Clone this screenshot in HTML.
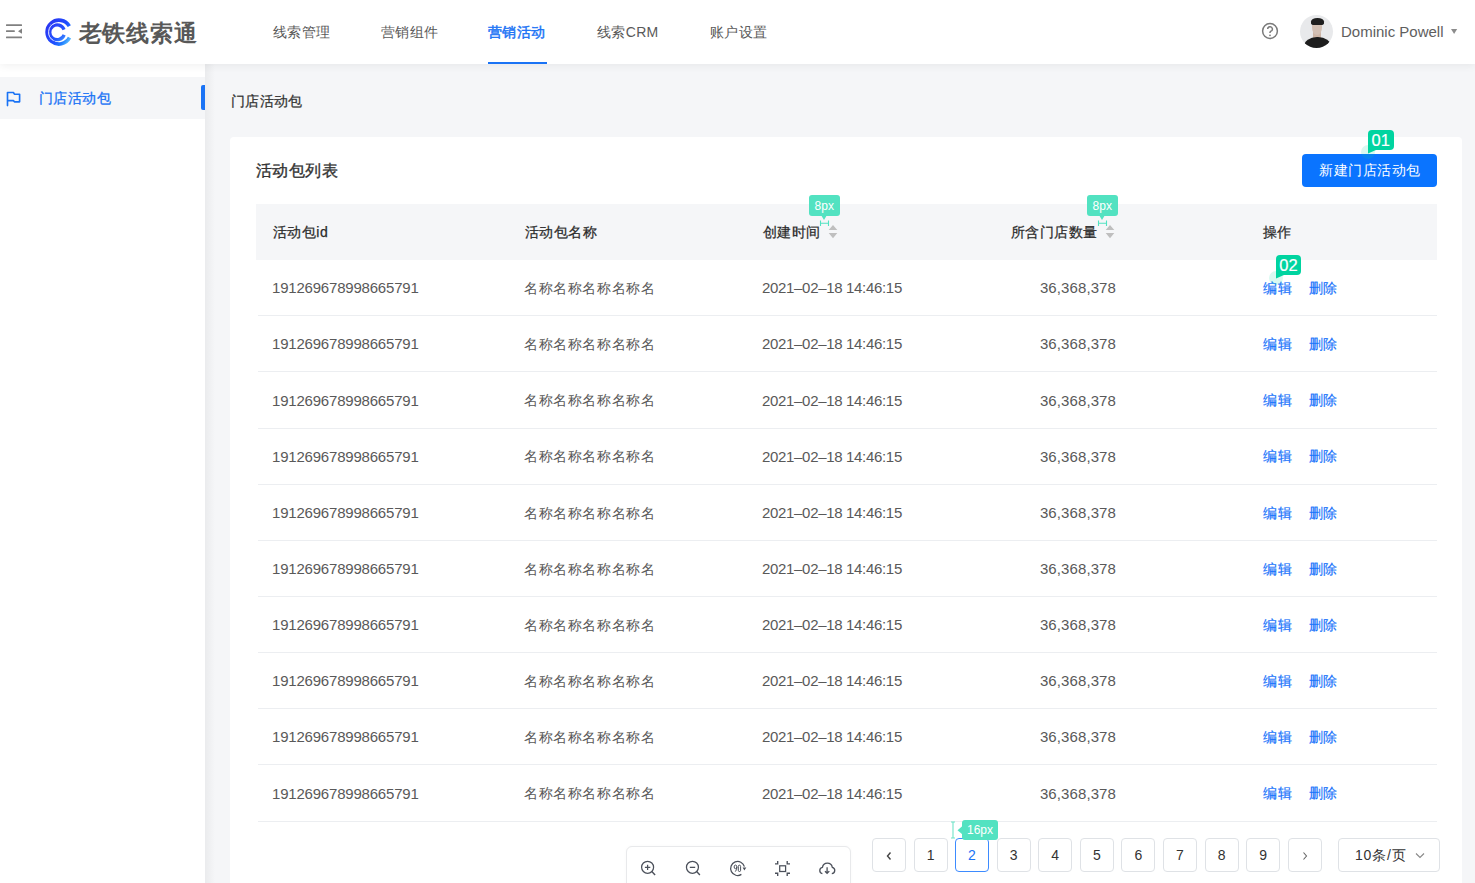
<!DOCTYPE html>
<html><head><meta charset="utf-8">
<style>
*{box-sizing:border-box;margin:0;padding:0}
html,body{width:1475px;height:883px;overflow:hidden;background:#f5f6f8;font-family:"Liberation Sans",sans-serif;color:#595959}
.abs{position:absolute}
#hdr{position:absolute;left:0;top:0;width:1475px;height:64px;background:#fff;box-shadow:0 2px 8px rgba(0,0,0,0.06);z-index:5}
#side{position:absolute;left:0;top:64px;width:205px;height:819px;background:#fff;z-index:2}
.nav{position:absolute;top:22.5px;font-size:14px;color:#595959;white-space:nowrap;line-height:18px;letter-spacing:0.35px}
.nav.on{color:#1a73f5;font-weight:normal;-webkit-text-stroke:0.45px #1a73f5}
#card{position:absolute;left:230px;top:137px;width:1232px;height:760px;background:#fff;border-radius:4px}
.th{position:absolute;font-size:14px;color:#2b2b2b;letter-spacing:0.45px;-webkit-text-stroke:0.25px #2b2b2b;white-space:nowrap;line-height:18px}
.td{position:absolute;font-size:14.5px;color:#595959;white-space:nowrap;line-height:18px}
.row-line{position:absolute;left:258px;width:1179px;height:1px;background:#eceef1}
.link{color:#1a74fb;-webkit-text-stroke:0.2px #1a74fb}
.pg{position:absolute;top:838px;width:34px;height:34px;border:1px solid #dfe2e6;border-radius:4px;background:#fff;font-size:14px;color:#333;text-align:center;line-height:32px}
.tag{position:absolute;background:#3fd8a9;color:#fff;border-radius:3px;font-size:11px;text-align:center}
.pg.on{border-color:#3d8bff;color:#1a73f5}
.tag8{position:absolute;width:30.5px;height:21px;background:#52e2c1;border-radius:3px;color:#fff;font-size:12px;line-height:23px;text-align:center}
.tagn{position:absolute;width:25.5px;height:20px;background:#00d4a0;border-radius:4px;color:#fff;font-size:16.5px;font-weight:normal;-webkit-text-stroke:0.2px #fff;line-height:20px;text-align:center}
</style></head><body>
<div id="hdr">
  <!-- hamburger -->
  <svg class="abs" style="left:5px;top:23px" width="18" height="17" viewBox="0 0 18 17">
    <rect x="1" y="1.2" width="16" height="1.7" rx="0.5" fill="#808080"/>
    <rect x="1" y="7.3" width="8.8" height="1.7" rx="0.5" fill="#808080"/>
    <rect x="1" y="13.6" width="16" height="1.7" rx="0.5" fill="#808080"/>
    <path d="M17 5.6 L13 8.2 L17 10.7 Z" fill="#808080"/>
  </svg>
  <!-- logo -->
  <svg class="abs" style="left:40px;top:12px" width="40" height="40" viewBox="0 0 40 40">
    <defs><linearGradient id="lg" x1="0" y1="0.2" x2="1" y2="0.9"><stop offset="0" stop-color="#2a36f2"/><stop offset="0.55" stop-color="#1f4dff"/><stop offset="0.8" stop-color="#1f7dff"/><stop offset="1" stop-color="#5cc0ff"/></linearGradient>
    <linearGradient id="lg2" x1="0" y1="0" x2="1" y2="1"><stop offset="0" stop-color="#2c38f5"/><stop offset="0.7" stop-color="#2458ff"/><stop offset="1" stop-color="#3d8dff"/></linearGradient></defs>
    <path d="M29.31 14.15 A11.9 11.9 0 1 0 29.51 25.69" fill="none" stroke="url(#lg)" stroke-width="3.7"/>
    <path d="M10.04 27.62 A11.700000000000001 11.700000000000001 0 0 0 10.31 12.27" fill="none" stroke="#fff" stroke-width="0.5" opacity="0.6"/>
    <path d="M24.06 17.53 A7.4 7.4 0 1 0 24.15 22.83" fill="none" stroke="url(#lg2)" stroke-width="3.2"/>
    <path d="M13.40 28.51 A9.6 9.6 0 0 1 14.92 11.18" fill="none" stroke="#fff" stroke-width="0.9"/>
  </svg>
  <div class="abs" style="left:78.5px;top:17.5px;font-size:23px;font-weight:bold;color:#585858;letter-spacing:0.8px;line-height:30px">老铁线索通</div>
  <div class="nav" style="left:273px">线索管理</div>
  <div class="nav" style="left:381px">营销组件</div>
  <div class="nav on" style="left:488px">营销活动</div>
  <div class="abs" style="left:488px;top:62px;width:59px;height:2px;background:#1a73f5"></div>
  <div class="nav" style="left:597px">线索CRM</div>
  <div class="nav" style="left:710px">账户设置</div>
  <svg class="abs" style="left:1261px;top:22px" width="18" height="18" viewBox="0 0 18 18">
    <circle cx="9" cy="9" r="7.4" fill="none" stroke="#7a7a7a" stroke-width="1.5"/>
    <path d="M6.7 7.1 A2.35 2.35 0 1 1 9.7 9.3 Q9 9.7 9 10.5 L9 11" fill="none" stroke="#7a7a7a" stroke-width="1.5"/>
    <circle cx="9" cy="13.3" r="0.9" fill="#7a7a7a"/>
  </svg>
  <div class="abs" style="left:1300px;top:15px;width:33px;height:33px;border-radius:50%;background:#e8e9eb;overflow:hidden">
    <div class="abs" style="left:12.5px;top:16px;width:8px;height:8px;background:#cdb5a6"></div>
    <div class="abs" style="left:3.5px;top:21.5px;width:27px;height:20px;border-radius:48% 48% 0 0;background:#1d1d1d"></div>
    <div class="abs" style="left:11.5px;top:5px;width:10.5px;height:15px;border-radius:42% 42% 50% 50%;background:#d3c0b4"></div>
    <div class="abs" style="left:11px;top:3px;width:12.5px;height:7px;border-radius:50% 50% 25% 25%;background:#1f1f1f"></div>
  </div>
  <div class="abs" style="left:1341px;top:22.5px;font-size:15px;color:#5e5e5e;line-height:18px">Dominic Powell</div>
  <svg class="abs" style="left:1450.5px;top:28.5px" width="7" height="6" viewBox="0 0 7 6"><path d="M0 0 L6.2 0 L3.1 5 Z" fill="#8c8c8c"/></svg>
</div>

<div class="abs" style="left:205px;top:64px;width:10px;height:819px;background:linear-gradient(to right,rgba(0,0,0,0.045),rgba(0,0,0,0));z-index:1"></div>
<div id="side">
  <div class="abs" style="left:0;top:13px;width:205px;height:42px;background:#f5f6f8"></div>
  <div class="abs" style="left:201px;top:21px;width:4px;height:25px;background:#1a73f5;border-radius:2px 0 0 2px"></div>
  <svg class="abs" style="left:0px;top:20px" width="30" height="30" viewBox="0 0 30 30">
    <path d="M7.5 21.6 V8.5 H13.4 L14.4 10.2 H19.6 V17.8 H14.4 L13.4 16.6 H7.5" fill="none" stroke="#1a73f5" stroke-width="1.65" stroke-linejoin="round" stroke-linecap="round"/>
  </svg>
  <div class="abs" style="left:39px;top:25px;font-size:14px;color:#1a73f5;line-height:18px;letter-spacing:0.4px;-webkit-text-stroke:0.3px #1a73f5">门店活动包</div>
</div>

<div class="abs" style="left:231px;top:92px;font-size:14px;color:#333;line-height:18px;letter-spacing:0.3px;-webkit-text-stroke:0.25px #333">门店活动包</div>

<div id="card"></div>
<div class="abs" style="left:256px;top:161px;font-size:16px;color:#333;line-height:20px;letter-spacing:0.4px;-webkit-text-stroke:0.35px #333">活动包列表</div>
<div class="abs" style="left:1302px;top:154px;width:135px;height:33px;background:#0a74ff;border-radius:4px;color:#fff;font-size:14px;text-align:center;line-height:33px;letter-spacing:0.5px;padding-left:1px">新建门店活动包</div>

<!-- table header -->
<div class="abs" style="left:256px;top:204px;width:1181px;height:56px;background:#f5f6f8"></div>
<div class="th" style="left:273px;top:223px">活动包id</div>
<div class="th" style="left:525px;top:223px">活动包名称</div>
<div class="th" style="left:763px;top:223px">创建时间</div>
<div class="th" style="left:1011px;top:223px">所含门店数量</div>
<div class="th" style="left:1263px;top:223px">操作</div>
<svg class="abs" style="left:828px;top:223px" width="10" height="16" viewBox="0 0 10 16"><path d="M0.7 7 L5 2 L9.3 7 Z M0.7 10 L5 15.3 L9.3 10 Z" fill="#bfbfbf"/></svg>
<svg class="abs" style="left:1105px;top:223px" width="10" height="16" viewBox="0 0 10 16"><path d="M0.7 7 L5 2 L9.3 7 Z M0.7 10 L5 15.3 L9.3 10 Z" fill="#bfbfbf"/></svg>

<!-- rows -->
<div class="td" style="left:272px;top:279.20px;font-size:15px;letter-spacing:-0.2px">191269678998665791</div>
<div class="td" style="left:524px;top:279.0px;font-size:14px;letter-spacing:0.6px">名称名称名称名称名</div>
<div class="td" style="left:762px;top:279.20px;font-size:15px;letter-spacing:-0.32px">2021–02–18 14:46:15</div>
<div class="td" style="left:1000px;top:279.20px;width:116px;text-align:right;font-size:15px"><span style="letter-spacing:0.1px">36,368,378</span></div>
<div class="td link" style="left:1263px;top:279.0px;font-size:14px;letter-spacing:0.7px">编辑</div>
<div class="td link" style="left:1308.5px;top:279.0px;font-size:14px;letter-spacing:0.7px">删除</div>
<div class="row-line" style="top:315.20px"></div>
<div class="td" style="left:272px;top:335.35px;font-size:15px;letter-spacing:-0.2px">191269678998665791</div>
<div class="td" style="left:524px;top:335.15px;font-size:14px;letter-spacing:0.6px">名称名称名称名称名</div>
<div class="td" style="left:762px;top:335.35px;font-size:15px;letter-spacing:-0.32px">2021–02–18 14:46:15</div>
<div class="td" style="left:1000px;top:335.35px;width:116px;text-align:right;font-size:15px"><span style="letter-spacing:0.1px">36,368,378</span></div>
<div class="td link" style="left:1263px;top:335.15px;font-size:14px;letter-spacing:0.7px">编辑</div>
<div class="td link" style="left:1308.5px;top:335.15px;font-size:14px;letter-spacing:0.7px">删除</div>
<div class="row-line" style="top:371.35px"></div>
<div class="td" style="left:272px;top:391.50px;font-size:15px;letter-spacing:-0.2px">191269678998665791</div>
<div class="td" style="left:524px;top:391.3px;font-size:14px;letter-spacing:0.6px">名称名称名称名称名</div>
<div class="td" style="left:762px;top:391.50px;font-size:15px;letter-spacing:-0.32px">2021–02–18 14:46:15</div>
<div class="td" style="left:1000px;top:391.50px;width:116px;text-align:right;font-size:15px"><span style="letter-spacing:0.1px">36,368,378</span></div>
<div class="td link" style="left:1263px;top:391.3px;font-size:14px;letter-spacing:0.7px">编辑</div>
<div class="td link" style="left:1308.5px;top:391.3px;font-size:14px;letter-spacing:0.7px">删除</div>
<div class="row-line" style="top:427.50px"></div>
<div class="td" style="left:272px;top:447.65px;font-size:15px;letter-spacing:-0.2px">191269678998665791</div>
<div class="td" style="left:524px;top:447.45px;font-size:14px;letter-spacing:0.6px">名称名称名称名称名</div>
<div class="td" style="left:762px;top:447.65px;font-size:15px;letter-spacing:-0.32px">2021–02–18 14:46:15</div>
<div class="td" style="left:1000px;top:447.65px;width:116px;text-align:right;font-size:15px"><span style="letter-spacing:0.1px">36,368,378</span></div>
<div class="td link" style="left:1263px;top:447.45px;font-size:14px;letter-spacing:0.7px">编辑</div>
<div class="td link" style="left:1308.5px;top:447.45px;font-size:14px;letter-spacing:0.7px">删除</div>
<div class="row-line" style="top:483.65px"></div>
<div class="td" style="left:272px;top:503.80px;font-size:15px;letter-spacing:-0.2px">191269678998665791</div>
<div class="td" style="left:524px;top:503.6px;font-size:14px;letter-spacing:0.6px">名称名称名称名称名</div>
<div class="td" style="left:762px;top:503.80px;font-size:15px;letter-spacing:-0.32px">2021–02–18 14:46:15</div>
<div class="td" style="left:1000px;top:503.80px;width:116px;text-align:right;font-size:15px"><span style="letter-spacing:0.1px">36,368,378</span></div>
<div class="td link" style="left:1263px;top:503.6px;font-size:14px;letter-spacing:0.7px">编辑</div>
<div class="td link" style="left:1308.5px;top:503.6px;font-size:14px;letter-spacing:0.7px">删除</div>
<div class="row-line" style="top:539.80px"></div>
<div class="td" style="left:272px;top:559.95px;font-size:15px;letter-spacing:-0.2px">191269678998665791</div>
<div class="td" style="left:524px;top:559.75px;font-size:14px;letter-spacing:0.6px">名称名称名称名称名</div>
<div class="td" style="left:762px;top:559.95px;font-size:15px;letter-spacing:-0.32px">2021–02–18 14:46:15</div>
<div class="td" style="left:1000px;top:559.95px;width:116px;text-align:right;font-size:15px"><span style="letter-spacing:0.1px">36,368,378</span></div>
<div class="td link" style="left:1263px;top:559.75px;font-size:14px;letter-spacing:0.7px">编辑</div>
<div class="td link" style="left:1308.5px;top:559.75px;font-size:14px;letter-spacing:0.7px">删除</div>
<div class="row-line" style="top:595.95px"></div>
<div class="td" style="left:272px;top:616.10px;font-size:15px;letter-spacing:-0.2px">191269678998665791</div>
<div class="td" style="left:524px;top:615.9px;font-size:14px;letter-spacing:0.6px">名称名称名称名称名</div>
<div class="td" style="left:762px;top:616.10px;font-size:15px;letter-spacing:-0.32px">2021–02–18 14:46:15</div>
<div class="td" style="left:1000px;top:616.10px;width:116px;text-align:right;font-size:15px"><span style="letter-spacing:0.1px">36,368,378</span></div>
<div class="td link" style="left:1263px;top:615.9px;font-size:14px;letter-spacing:0.7px">编辑</div>
<div class="td link" style="left:1308.5px;top:615.9px;font-size:14px;letter-spacing:0.7px">删除</div>
<div class="row-line" style="top:652.10px"></div>
<div class="td" style="left:272px;top:672.25px;font-size:15px;letter-spacing:-0.2px">191269678998665791</div>
<div class="td" style="left:524px;top:672.05px;font-size:14px;letter-spacing:0.6px">名称名称名称名称名</div>
<div class="td" style="left:762px;top:672.25px;font-size:15px;letter-spacing:-0.32px">2021–02–18 14:46:15</div>
<div class="td" style="left:1000px;top:672.25px;width:116px;text-align:right;font-size:15px"><span style="letter-spacing:0.1px">36,368,378</span></div>
<div class="td link" style="left:1263px;top:672.05px;font-size:14px;letter-spacing:0.7px">编辑</div>
<div class="td link" style="left:1308.5px;top:672.05px;font-size:14px;letter-spacing:0.7px">删除</div>
<div class="row-line" style="top:708.25px"></div>
<div class="td" style="left:272px;top:728.40px;font-size:15px;letter-spacing:-0.2px">191269678998665791</div>
<div class="td" style="left:524px;top:728.2px;font-size:14px;letter-spacing:0.6px">名称名称名称名称名</div>
<div class="td" style="left:762px;top:728.40px;font-size:15px;letter-spacing:-0.32px">2021–02–18 14:46:15</div>
<div class="td" style="left:1000px;top:728.40px;width:116px;text-align:right;font-size:15px"><span style="letter-spacing:0.1px">36,368,378</span></div>
<div class="td link" style="left:1263px;top:728.2px;font-size:14px;letter-spacing:0.7px">编辑</div>
<div class="td link" style="left:1308.5px;top:728.2px;font-size:14px;letter-spacing:0.7px">删除</div>
<div class="row-line" style="top:764.40px"></div>
<div class="td" style="left:272px;top:784.55px;font-size:15px;letter-spacing:-0.2px">191269678998665791</div>
<div class="td" style="left:524px;top:784.35px;font-size:14px;letter-spacing:0.6px">名称名称名称名称名</div>
<div class="td" style="left:762px;top:784.55px;font-size:15px;letter-spacing:-0.32px">2021–02–18 14:46:15</div>
<div class="td" style="left:1000px;top:784.55px;width:116px;text-align:right;font-size:15px"><span style="letter-spacing:0.1px">36,368,378</span></div>
<div class="td link" style="left:1263px;top:784.35px;font-size:14px;letter-spacing:0.7px">编辑</div>
<div class="td link" style="left:1308.5px;top:784.35px;font-size:14px;letter-spacing:0.7px">删除</div>
<div class="row-line" style="top:820.55px"></div>
<!-- /rows -->
<!-- pagination -->
<div class="pg" style="left:872px"><svg width="8" height="10" viewBox="0 0 8 10" style="vertical-align:-1px"><path d="M5.5 1.5 L2.5 5 L5.5 8.5" fill="none" stroke="#444" stroke-width="1.4"/></svg></div>
<div class="pg" style="left:913.6px">1</div>
<div class="pg on" style="left:955px">2</div>
<div class="pg" style="left:996.6px">3</div>
<div class="pg" style="left:1038.2px">4</div>
<div class="pg" style="left:1079.8px">5</div>
<div class="pg" style="left:1121.4px">6</div>
<div class="pg" style="left:1163px">7</div>
<div class="pg" style="left:1204.6px">8</div>
<div class="pg" style="left:1246.2px">9</div>
<div class="pg" style="left:1287.8px"><svg width="8" height="10" viewBox="0 0 8 10" style="vertical-align:-1px"><path d="M2.5 1.5 L5.5 5 L2.5 8.5" fill="none" stroke="#666" stroke-width="1.1"/></svg></div>
<div class="pg" style="left:1338px;width:102px;text-align:left;padding-left:16px;letter-spacing:0.8px">10条/页<svg class="abs" style="left:76px;top:13px" width="10" height="7" viewBox="0 0 10 7"><path d="M1 1.5 L5 5.5 L9 1.5" fill="none" stroke="#888" stroke-width="1.1"/></svg></div>

<!-- toolbar -->
<div class="abs" style="left:626px;top:846px;width:225px;height:50px;background:#fff;border:1px solid #e8e9eb;border-radius:6px;box-shadow:0 0 3px rgba(0,0,0,0.03)"></div>
<svg class="abs" style="left:620px;top:850px" width="230" height="33" viewBox="0 0 230 33" fill="none" stroke="#4b505a" stroke-width="1.25">
  <circle cx="27.6" cy="17.3" r="6"/><path d="M31.8 21.6 L35.1 25" stroke-width="1.4"/><path d="M27.6 14.7 V20 M24.9 17.35 H30.3"/>
  <circle cx="72.45" cy="17.3" r="6"/><path d="M76.6 21.6 L79.9 25" stroke-width="1.4"/><path d="M69.8 17.35 H75.2"/>
  <path d="M121.4 24.4 A7 7 0 1 1 124.4 16.6"/><path d="M122.6 17.6 L126.3 17.6 L124.4 20.4 Z" fill="#4b505a" stroke="none"/>
  <ellipse cx="115.5" cy="16.9" rx="1.35" ry="1.85" stroke-width="1"/><path d="M116.85 17 Q116.9 20 115.3 21.6" stroke-width="1"/>
  <rect x="118.3" y="15.2" width="2.3" height="6.3" rx="1.15" stroke-width="1"/>
  <rect x="159.7" y="15.8" width="5.9" height="5.7"/>
  <path d="M155 13.9 H157.7 V11 M170 13.9 H167.2 V11 M155 23.2 H157.7 V25.9 M170 23.2 H167.2 V25.9" stroke-width="1.35"/>
  <path d="M202.4 23.6 A3.2 3.2 0 0 1 202.46 17.3 A5 5 0 0 1 212.3 17.3 A3.2 3.2 0 0 1 211.8 23.6" stroke-width="1.3"/>
  <path d="M207.1 17.3 V23.2 M205 21.2 L207.1 23.3 L209.3 21.1" stroke-width="1.3"/>
</svg>

<!-- annotation tags -->
<div class="tag8" style="left:809px;top:195px">8px</div>
<svg class="abs" style="left:819px;top:215px" width="12" height="12" viewBox="0 0 12 12"><path d="M2 0 L5 5 L8 0 Z" fill="#52e2c1"/><path d="M1.5 5.5 V11 M1.5 8.2 H9.5 M9.5 5.5 V11" stroke="#52e2c1" stroke-width="1.1" fill="none"/></svg>
<div class="tag8" style="left:1087px;top:195px">8px</div>
<svg class="abs" style="left:1097px;top:215px" width="12" height="12" viewBox="0 0 12 12"><path d="M2 0 L5 5 L8 0 Z" fill="#52e2c1"/><path d="M1.5 5.5 V11 M1.5 8.2 H9.5 M9.5 5.5 V11" stroke="#52e2c1" stroke-width="1.1" fill="none"/></svg>

<div class="abs" style="left:1361px;top:145px;width:14px;height:14px;border-radius:50%;background:rgba(0,212,160,0.15)"></div>
<div class="tagn" style="left:1368px;top:130px">01</div>
<svg class="abs" style="left:1368px;top:146px" width="10" height="8" viewBox="0 0 10 8"><path d="M0 0 L0 7.5 L8 4 L8 0 Z" fill="#00d4a0"/></svg>
<div class="abs" style="left:1269px;top:271px;width:14px;height:14px;border-radius:50%;background:rgba(0,212,160,0.15)"></div>
<div class="tagn" style="left:1275.7px;top:255px">02</div>
<svg class="abs" style="left:1275.7px;top:271px" width="10" height="8" viewBox="0 0 10 8"><path d="M0 0 L0 7.5 L8 4 L8 0 Z" fill="#00d4a0"/></svg>

<div class="abs" style="left:962px;top:819.7px;width:36px;height:20.5px;background:#52e2c1;border-radius:3px;color:#fff;font-size:12px;line-height:20px;text-align:center">16px</div>
<svg class="abs" style="left:950px;top:821px" width="14" height="19" viewBox="0 0 14 19"><path d="M12.5 5 L7.5 9.2 L12.5 13.4 Z" fill="#52e2c1"/><path d="M1 1 H5 M3 1 V17 M1 17 H5" stroke="#6fe3c8" stroke-width="1.1" fill="none"/></svg>
</body></html>
